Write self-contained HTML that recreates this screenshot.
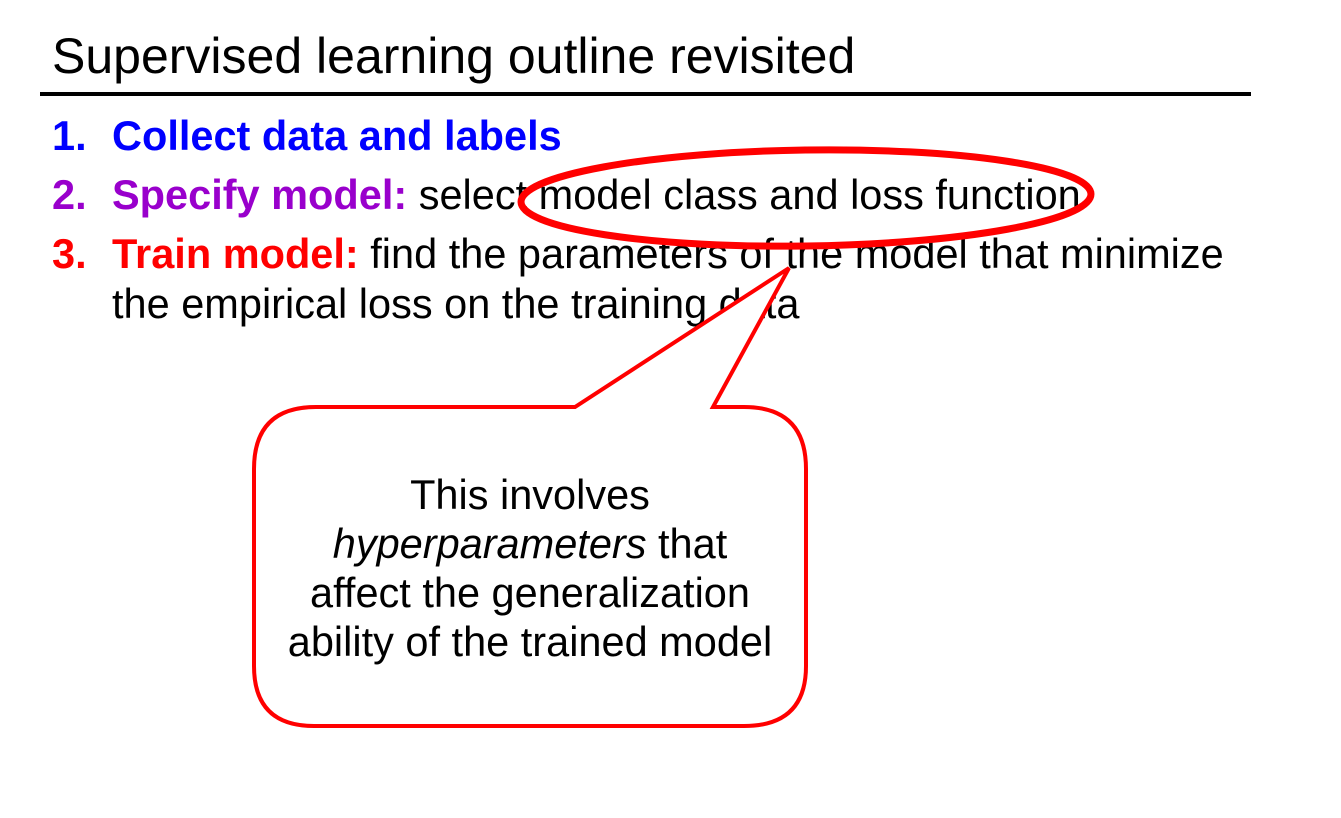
<!DOCTYPE html>
<html><head><meta charset="utf-8"><style>
html,body{margin:0;padding:0;background:#fff;width:1341px;height:818px;overflow:hidden}
svg{display:block;font-family:"Liberation Sans",Arial,sans-serif}
</style></head><body>
<svg width="1341" height="818" viewBox="0 0 1341 818">
<text x="52" y="73" font-size="50" fill="#000">Supervised learning outline revisited</text>
<rect x="40" y="92" width="1211" height="4" fill="#000"/>
<g font-size="41.5">
<text x="52" y="150" fill="#0000ff" font-weight="bold">1.</text>
<text x="112" y="150" fill="#0000ff" font-weight="bold">Collect data and labels</text>
<text x="52" y="209" fill="#9900cc" font-weight="bold">2.</text>
<text x="112" y="209"><tspan fill="#9900cc" font-weight="bold">Specify model:</tspan><tspan fill="#000"> select model class and loss function</tspan></text>
<text x="52" y="268" fill="#ff0000" font-weight="bold">3.</text>
<text x="112" y="268"><tspan fill="#ff0000" font-weight="bold">Train model:</tspan><tspan fill="#000"> find the parameters of the model that minimize</tspan></text>
<text x="112" y="318" fill="#000">the empirical loss on the training data</text>
</g>
<ellipse cx="806" cy="198" rx="285" ry="48" fill="none" stroke="#ff0000" stroke-width="7" transform="rotate(-0.8 806 198)"/>
<path d="M316,407 L575,407 L789,268 L713,407 L744,407 Q806,407 806,469 L806,666 Q806,726 744,726 L314,726 Q254,726 254,666 L254,469 Q254,407 316,407 Z" fill="#fff" stroke="#ff0000" stroke-width="4" stroke-linejoin="miter"/>
<g font-size="41.5" fill="#000" text-anchor="middle">
<text x="530" y="509">This involves</text>
<text x="530" y="558"><tspan font-style="italic">hyperparameters</tspan> that</text>
<text x="530" y="607">affect the generalization</text>
<text x="530" y="656">ability of the trained model</text>
</g>
</svg>
</body></html>
